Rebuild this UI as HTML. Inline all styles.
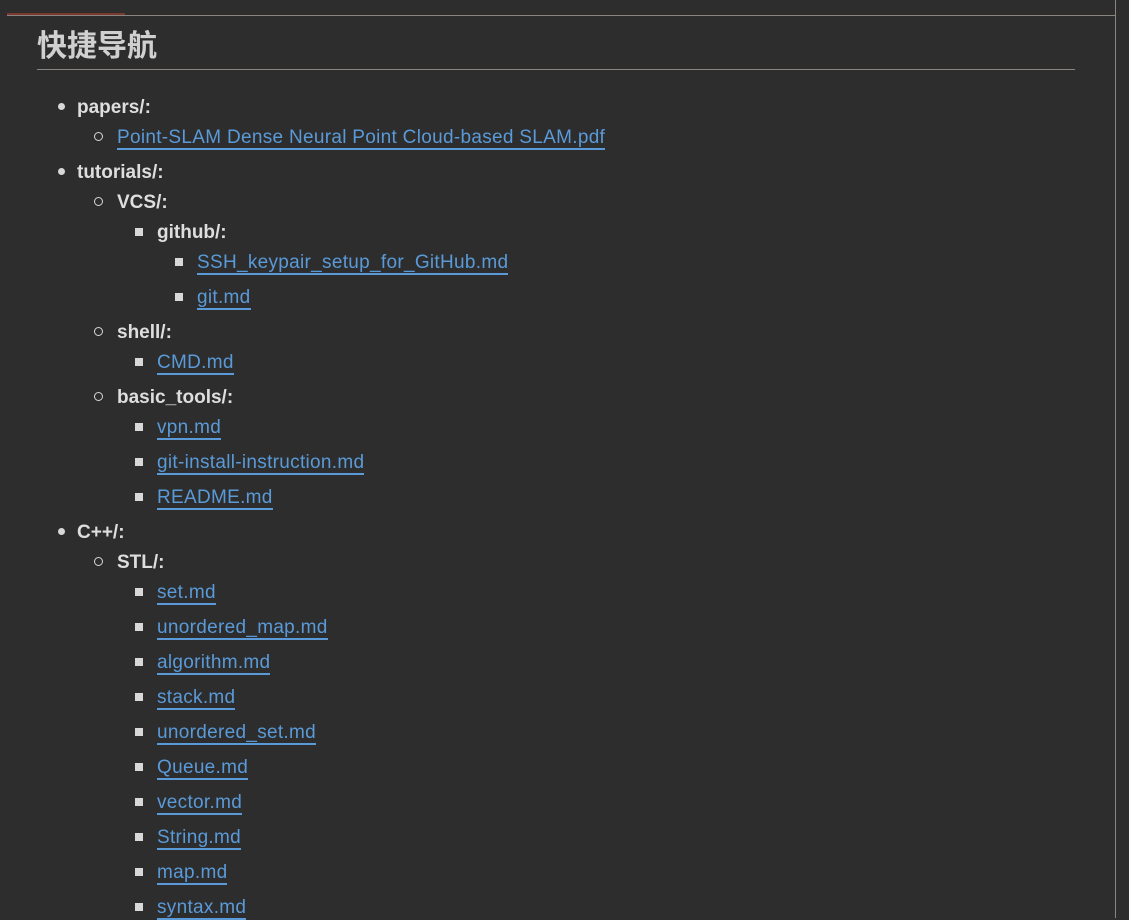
<!DOCTYPE html>
<html><head><meta charset="utf-8"><style>
html,body{margin:0;padding:0}
body{width:1129px;height:918px;background:#2d2d2d;overflow:hidden;position:relative;font-family:"Liberation Sans","Noto Sans CJK SC",sans-serif;color:#dcdcdc}
.top{position:absolute;left:7px;top:15px;width:1108px;height:1px;background:#8a8580}
.red{position:absolute;left:7px;top:13px;width:118px;height:2px;background:#7a3b2e}
.vr{position:absolute;left:1115px;top:0;width:1px;height:918px;background:#8a8580}
h1{position:absolute;left:37px;top:26px;margin:0;font-size:30px;font-weight:bold;color:#d0d0d0;font-family:"Noto Sans CJK SC",sans-serif;line-height:34px}
.hr{position:absolute;left:37px;top:69px;width:1038px;height:1px;background:#8a8580}
.r{position:absolute;font-size:19px;line-height:22px;white-space:nowrap;margin-top:2px}
.r b{font-weight:bold;color:#dedede}
.r a{color:#5a9ad8;text-decoration:none;border-bottom:2px solid #5a9ad8;letter-spacing:0.3px}
.d{position:absolute;width:7px;height:7px;border-radius:50%;background:#d8d8d8}
.c{position:absolute;width:7px;height:7px;border-radius:50%;border:1.5px solid #d8d8d8;box-sizing:content-box}
.s{position:absolute;width:8px;height:8px;background:#d8d8d8}
</style></head><body>
<div class="red"></div><div class="top"></div><div class="vr"></div>
<h1>快捷导航</h1>
<div class="hr"></div>

<div class="d" style="left:58px;top:103px"></div><div class="r" style="left:77px;top:95px"><b>papers/:</b></div>
<div class="c" style="left:94px;top:132px"></div><div class="r" style="left:117px;top:125px"><a>Point-SLAM Dense Neural Point Cloud-based SLAM.pdf</a></div>
<div class="d" style="left:58px;top:168px"></div><div class="r" style="left:77px;top:160px"><b>tutorials/:</b></div>
<div class="c" style="left:94px;top:197px"></div><div class="r" style="left:117px;top:190px"><b>VCS/:</b></div>
<div class="s" style="left:135px;top:228px"></div><div class="r" style="left:157px;top:220px"><b>github/:</b></div>
<div class="s" style="left:175px;top:258px"></div><div class="r" style="left:197px;top:250px"><a>SSH_keypair_setup_for_GitHub.md</a></div>
<div class="s" style="left:175px;top:293px"></div><div class="r" style="left:197px;top:285px"><a>git.md</a></div>
<div class="c" style="left:94px;top:327px"></div><div class="r" style="left:117px;top:320px"><b>shell/:</b></div>
<div class="s" style="left:135px;top:358px"></div><div class="r" style="left:157px;top:350px"><a>CMD.md</a></div>
<div class="c" style="left:94px;top:392px"></div><div class="r" style="left:117px;top:385px"><b>basic_tools/:</b></div>
<div class="s" style="left:135px;top:423px"></div><div class="r" style="left:157px;top:415px"><a>vpn.md</a></div>
<div class="s" style="left:135px;top:458px"></div><div class="r" style="left:157px;top:450px"><a>git-install-instruction.md</a></div>
<div class="s" style="left:135px;top:493px"></div><div class="r" style="left:157px;top:485px"><a>README.md</a></div>
<div class="d" style="left:58px;top:528px"></div><div class="r" style="left:77px;top:520px"><b>C++/:</b></div>
<div class="c" style="left:94px;top:557px"></div><div class="r" style="left:117px;top:550px"><b>STL/:</b></div>
<div class="s" style="left:135px;top:588px"></div><div class="r" style="left:157px;top:580px"><a>set.md</a></div>
<div class="s" style="left:135px;top:623px"></div><div class="r" style="left:157px;top:615px"><a>unordered_map.md</a></div>
<div class="s" style="left:135px;top:658px"></div><div class="r" style="left:157px;top:650px"><a>algorithm.md</a></div>
<div class="s" style="left:135px;top:693px"></div><div class="r" style="left:157px;top:685px"><a>stack.md</a></div>
<div class="s" style="left:135px;top:728px"></div><div class="r" style="left:157px;top:720px"><a>unordered_set.md</a></div>
<div class="s" style="left:135px;top:763px"></div><div class="r" style="left:157px;top:755px"><a>Queue.md</a></div>
<div class="s" style="left:135px;top:798px"></div><div class="r" style="left:157px;top:790px"><a>vector.md</a></div>
<div class="s" style="left:135px;top:833px"></div><div class="r" style="left:157px;top:825px"><a>String.md</a></div>
<div class="s" style="left:135px;top:868px"></div><div class="r" style="left:157px;top:860px"><a>map.md</a></div>
<div class="s" style="left:135px;top:903px"></div><div class="r" style="left:157px;top:895px"><a>syntax.md</a></div>
</body></html>
